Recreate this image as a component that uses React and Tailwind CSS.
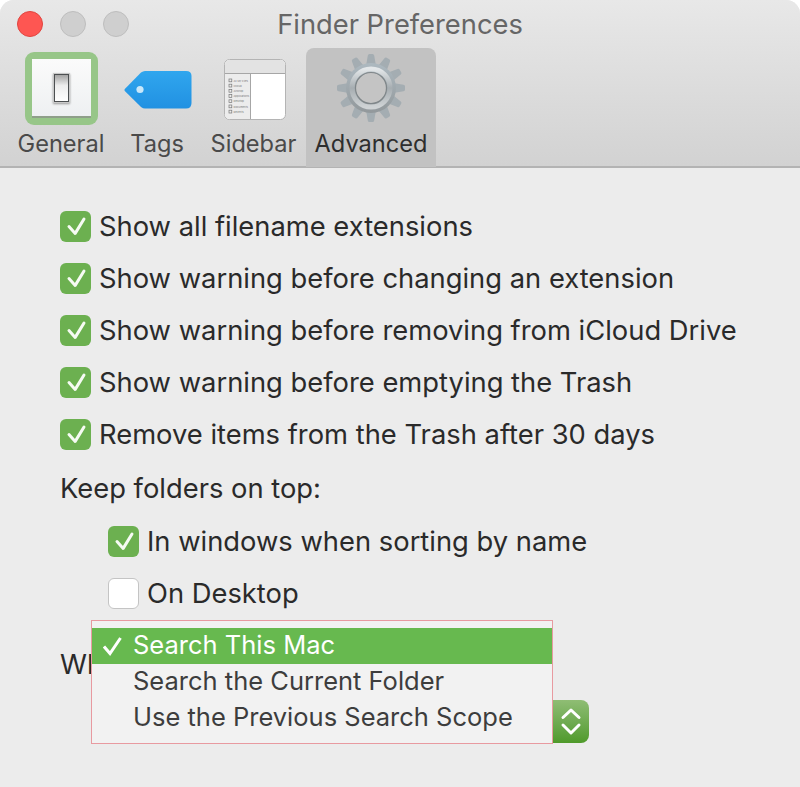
import React from "react";

const font = { fontFamily: "Inter, 'Noto Sans', sans-serif" };

// the checked tick and the empty box use the same size
const Checkbox = ({ checked = true }) =>
  checked ? (
    <span className="flex h-[31px] w-[31px] shrink-0 items-center justify-center rounded-[6px] bg-[#6cb050]">
      <svg width="22" height="22" viewBox="0 0 22 22" fill="none">
        <path d="M4 11.6 L10.2 18.4 L19 4" stroke="#f6fbf3" strokeWidth="3" strokeLinecap="round" strokeLinejoin="round" />
      </svg>
    </span>
  ) : (
    <span className="h-[31px] w-[31px] shrink-0 rounded-[6px] border border-[#c4c4c4] bg-white" />
  );

const Row = ({ label, checked, className = "" }) => (
  <div className={`flex h-[52px] items-center gap-[8px] ${className}`}>
    <Checkbox checked={checked} />
    <span className="pt-[2px]">{label}</span>
  </div>
);

const SwitchIcon = () => (
  <div className="flex h-[73px] w-[73px] items-center justify-center rounded-[9px] bg-[#97c688]">
    <div className="flex h-[59px] w-[59px] items-center justify-center border-b-2 border-[#8f9f8a] bg-gradient-to-b from-[#fbfbfb] to-[#eef0f2]">
      <div className="h-[30px] w-[17px] border border-[#c9c9c9] bg-white shadow-[0_1px_2px_#999]">
        <div className="h-full w-full border-[1.5px] border-[#4c4f51] bg-gradient-to-b from-[#a4a4a4] via-[#ededed] via-40% to-[#ffffff]" />
      </div>
    </div>
  </div>
);

const TagIcon = () => (
  <svg width="68" height="40" viewBox="0 0 68 40">
    <defs>
      <linearGradient id="tag" x1="0" y1="0" x2="0" y2="1">
        <stop offset="0" stopColor="#30a6ee" />
        <stop offset="1" stopColor="#2191e2" />
      </linearGradient>
    </defs>
    <path
      d="M0.8 19 L17 2.5 Q19 1 21 1 L62 1 Q67.5 1 67.5 6 L67.5 33 Q67.5 38.5 62 38.5 L21 38.5 Q19 38.5 17 37 L0.8 21 Q0 20 0.8 19 Z"
      fill="url(#tag)"
    />
    <circle cx="16" cy="19.5" r="3.6" fill="#c9e8fa" />
  </svg>
);

const SidebarIcon = () => {
  const items = ["All My Files", "iCloud", "AirDrop", "Applications", "Desktop", "Documents", "Recents"];
  return (
    <svg width="62" height="62" viewBox="0 0 62 62">
      <rect x="0.5" y="0.5" width="61" height="60" rx="5" fill="#ffffff" stroke="#b4b4b4" />
      <path d="M1 14 L1 6 Q1 1 6 1 L56 1 Q61 1 61 6 L61 14 Z" fill="#e3e3e3" />
      <path d="M1 14 L26 14 L26 60 L6 60 Q1 60 1 55 Z" fill="#ececec" />
      <path d="M1 14.5 L61 14.5 M26.5 14 L26.5 60" stroke="#a6a6a6" strokeWidth="1" />
      {items.map((item, i) => (
        <g key={item}>
          <rect x="5" y={20 + i * 5.2} width="2.8" height="2.8" fill="none" stroke="#777" strokeWidth="0.7" />
          <text x="9.5" y={22.6 + i * 5.2} fontSize="2.7" fill="#777" fontFamily="Inter, sans-serif">
            {item}
          </text>
        </g>
      ))}
    </svg>
  );
};

const GearIcon = () => {
  const teeth = Array.from({ length: 12 }, (_, i) => i * 30);
  return (
    <svg width="70" height="70" viewBox="-35 -35 70 70">
      <defs>
        <linearGradient id="gear" x1="0" y1="0" x2="0" y2="1">
          <stop offset="0" stopColor="#adb9c0" />
          <stop offset="1" stopColor="#92989b" />
        </linearGradient>
        <linearGradient id="ring" x1="0" y1="0" x2="0" y2="1">
          <stop offset="0" stopColor="#e3e7e9" />
          <stop offset="0.5" stopColor="#a6adb1" />
          <stop offset="1" stopColor="#cfd3d5" />
        </linearGradient>
      </defs>
      {teeth.map((deg) => (
        <path
          key={deg}
          d="M-5 -22 L-3.2 -32.5 Q-3 -34 -1.5 -34 L1.5 -34 Q3 -34 3.2 -32.5 L5 -22 Z"
          fill="#a4adb2"
          transform={`rotate(${deg})`}
        />
      ))}
      <circle r="25" fill="url(#gear)" />
      <circle r="19" fill="none" stroke="url(#ring)" strokeWidth="5" />
      <circle r="15.5" fill="#c4c4c4" stroke="#7f8689" strokeWidth="1.2" />
    </svg>
  );
};

const Toolbar = () => (
  <div className="h-[168px] border-b-2 border-[#b3b3b3] bg-gradient-to-b from-[#e8e8e8] to-[#d2d2d2] text-[23.6px] text-[#4a4a4a]">
    <div className="grid h-[48px] grid-cols-[1fr_auto_1fr] items-center">
      <div className="flex gap-[17px] pl-[17px]">
        <span className="h-[26px] w-[26px] rounded-full border border-[#e0443e] bg-[#fe5652]" />
        <span className="h-[26px] w-[26px] rounded-full border border-[#bdbdbd] bg-[#cfcfcf]" />
        <span className="h-[26px] w-[26px] rounded-full border border-[#bdbdbd] bg-[#cfcfcf]" />
      </div>
      <div className="pt-[2px] text-[27.3px] text-[#666666]">Finder Preferences</div>
    </div>
    <div className="flex h-[119px] pl-[13px]">
      <div className="flex w-[96px] flex-col items-center">
        <div className="mt-[4px] h-[73px]">
          <SwitchIcon />
        </div>
        <div className="mt-[1px]">General</div>
      </div>
      <div className="flex w-[96px] flex-col items-center">
        <div className="ml-[2px] mt-[22px] h-[55px]">
          <TagIcon />
        </div>
        <div className="mt-[1px]">Tags</div>
      </div>
      <div className="flex w-[97px] flex-col items-center">
        <div className="ml-[2px] mt-[11px] h-[62px]">
          <SidebarIcon />
        </div>
        <div className="mt-[5px]">Sidebar</div>
      </div>
      <div className="ml-[4px] flex w-[130px] flex-col items-center rounded-t-lg bg-[#c2c2c2] text-[#2e2e2e]">
        <div className="mt-[5px] h-[70px]">
          <GearIcon />
        </div>
        <div className="mt-[3px]">Advanced</div>
      </div>
    </div>
  </div>
);

const SearchMenu = () => (
  <div className="absolute left-[91px] top-[620px] w-[462px] border border-[#e89aa0] bg-[#f2f2f2] py-[7px] text-[25.5px] leading-[32px] text-[#3d3d3d]">
    <div className="flex h-[36px] items-center bg-[#67b94f] text-white">
      <svg className="ml-[11px] mr-[11px]" width="19" height="19" viewBox="0 0 19 19" fill="none">
        <path d="M1 9.5 L7 16.5 L17.5 1" stroke="#ffffff" strokeWidth="3" />
      </svg>
      <span className="pb-[2px]">Search This Mac</span>
    </div>
    <div className="flex h-[36px] items-center pb-[2px] pl-[41px]">Search the Current Folder</div>
    <div className="flex h-[36px] items-center pb-[2px] pl-[41px]">Use the Previous Search Scope</div>
  </div>
);

const App = () => {
  return (
    <div className="relative h-[787px] w-[800px] overflow-hidden bg-white" style={font}>
      <div className="h-full overflow-hidden rounded-t-[14px] bg-[#ececec]">
        <Toolbar />
        <div className="pl-[60px] pt-[32px] text-[27.35px] leading-[32px] text-[#2a2a2a]">
          <Row label="Show all filename extensions" />
          <Row label="Show warning before changing an extension" />
          <Row label="Show warning before removing from iCloud Drive" />
          <Row label="Show warning before emptying the Trash" />
          <Row label="Remove items from the Trash after 30 days" />
          <div className="flex h-[52px] items-center pt-[6px]">Keep folders on top:</div>
          <Row label="In windows when sorting by name" className="ml-[48px] mt-[3px]" />
          <Row label="On Desktop" checked={false} className="ml-[48px]" />
          {/* the open menu cuts this label off after "Wh" */}
          <div className="mt-[30px] h-[32px] w-[31px] overflow-hidden whitespace-nowrap">When performing a search:</div>
          <div className="ml-[300px] mt-[19px] flex h-[43px] w-[229px] justify-end rounded-lg bg-gradient-to-b from-[#8fbd74] to-[#4f9a2a]">
            <svg className="mr-[5px] mt-[7px]" width="26" height="30" viewBox="0 0 26 30" fill="none">
              <path d="M5 10.5 L13 3 L21 10.5 M5 18 L13 26 L21 18" stroke="#ffffff" strokeWidth="3" strokeLinecap="round" strokeLinejoin="round" />
            </svg>
          </div>
        </div>
      </div>
      <SearchMenu />
    </div>
  );
};

export default App;
